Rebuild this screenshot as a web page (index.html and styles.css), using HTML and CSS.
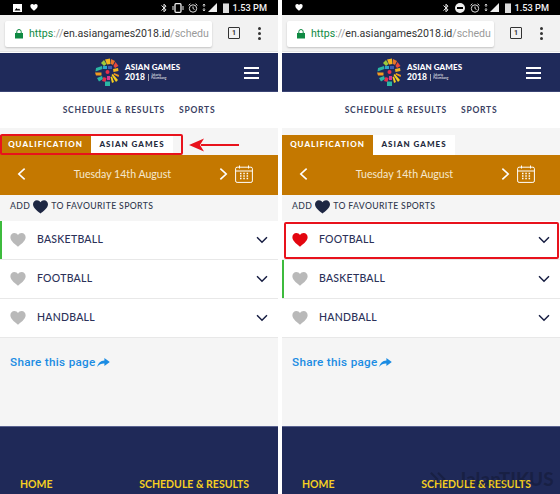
FILE: index.html
```html
<!DOCTYPE html>
<html lang="en">
<head>
<meta charset="UTF-8" />
<title>Asian Games 2018 favourite sports</title>
<link rel="stylesheet" href="styles.css">
</head>
<body>
<svg class="defs" width="0" height="0">
    <defs>
        <symbol id="heart" viewBox="0 0 24 22">
            <path d="M12 21.500C9 18.600 0 13 0 6.500 0 2.800 2.800 0 6.300 0 8.700 0 10.900 1.300 12 3.300 13.100 1.300 15.300 0 17.700 0 21.200 0 24 2.800 24 6.500 24 13 15 18.600 12 21.500Z"/>
        </symbol>
        <symbol id="chevron" viewBox="0 0 14 9">
            <path d="M1.200 1.200 7 7 12.800 1.200" fill="none" stroke="currentColor" stroke-width="1.700"/>
        </symbol>
        <symbol id="logo" viewBox="0 0 24 28">
            <path d="M6 5 9 2 11.500 6 9 8Z" fill="#9ccb3b"/>
            <path d="M10 1.500 15 0.500 15.500 6 12 6.500Z" fill="#f2b61e"/>
            <path d="M16 1 20 3 18 7 16 6Z" fill="#e8732a"/>
            <path d="M20.500 4 23.500 8 20 10 18.500 8Z" fill="#e9483c"/>
            <path d="M1 10 7 8 7.500 11 0.500 13.500Z" fill="#2bb6a3"/>
            <path d="M0 14.500H6.500V17.500H1Z" fill="#f29a1f"/>
            <path d="M8 8H12V11H8Z" fill="#2aa6c9"/>
            <path d="M13 8H17V11H13Z" fill="#3c5bb0"/>
            <path d="M18 11 23 10 23.500 13 18.500 14Z" fill="#f2b61e"/>
            <circle cx="12.500" cy="14" r="2" fill="#e9304a"/>
            <path d="M2 20 7 18 8 21 4 23.500Z" fill="#2bb6a3"/>
            <path d="M8.500 19 11.500 20 10.500 24 7 23Z" fill="#e9304a"/>
            <path d="M10 23.500H15V28H10Z" fill="#2bb6a3"/>
            <path d="M12 18H15V22H12Z" fill="#d8398f"/>
            <path d="M16.500 17 17.800 16 23 22 21 24Z" fill="#f6cf1e"/>
            <path d="M15.500 19 17 18.500 19 24 17 25Z" fill="#f6cf1e"/>
            <path d="M19 15 24 17 23.500 19 18.500 16.500Z" fill="#f29a1f"/>
        </symbol>
    </defs>
</svg>

<div class="phone">
    <div class="status">
        <div class="status-left">
            <svg class="ic-photo" viewBox="0 0 9 8"><path d="M0 0h9v8H0Z" fill="#fff"/><path d="M1.500 6.500 3.500 4 5 5.500 6 4.500 7.500 6.500Z" fill="#000"/></svg>
            <svg class="ic-small" viewBox="0 0 24 22"><use href="#heart" fill="#fff"/></svg>
        </div>
        <div class="status-right">
            <svg class="ic-bt" viewBox="0 0 6 10" fill="none" stroke="#eee"><path d="M.5 2.500 5 6.800 3 8.800V1.200L5 3.200.5 7.500"/></svg>
            <svg class="ic-vibrate" viewBox="0 0 12 10" fill="none" stroke="#eee"><rect x="3" y=".7" width="6" height="8.600" rx="1" stroke-width="1.300"/><path d="M1 3v4M11 3v4"/></svg>
            <svg class="ic-alarm" viewBox="0 0 10 10" fill="none" stroke="#ddd"><circle cx="5" cy="5.500" r="3.700"/><path d="M5 3.500v2l1.500 1M.6 2.400 2.400.7M9.400 2.400 7.600.7"/></svg>
            <svg class="ic-signal" viewBox="0 0 15 9"><path d="M2 1v3M1 2.500 2 1l1 1.500M2 8V5M1 6.500 2 8l1-1.500" stroke="#eee" fill="none" stroke-width=".8"/><path d="M15 0v9H6Z" fill="#eee"/></svg>
            <span class="ic-battery"></span>
            <span>1.53 PM</span>
        </div>
    </div>
    <div class="chrome">
        <div class="urlbar">
            <svg class="lock" viewBox="0 0 8 9"><path d="M0 3.500h8V9H0Z" fill="#0f8a43"/><path d="M1.800 3.500V2.200a2.200 2.200 0 0 1 4.400 0V3.500" fill="none" stroke="#0f8a43"/></svg>
            <span class="url"><span class="url-https">https</span><span class="url-dim">://</span>en.asiangames2018.id<span class="url-dim">/schedu</span></span>
        </div>
        <span class="tabcount">1</span>
        <span class="dots"><i></i><i></i><i></i></span>
    </div>
    <header class="head">
        <svg class="logo-mark"><use href="#logo"/></svg>
        <div class="logo-text">
            <div>ASIAN GAMES</div>
            <div class="logo-year">2018<span class="logo-sub">Jakarta<br>Palembang</span></div>
        </div>
        <span class="burger"><i></i><i></i><i></i></span>
    </header>
    <nav class="mainnav"><span>SCHEDULE &amp; RESULTS</span><span>SPORTS</span></nav>
    <main class="content">
        <div class="tabs">
            <span class="tab tab-on">QUALIFICATION</span>
            <span class="tab">ASIAN GAMES</span>
        </div>
        <div class="datebar">
            <svg class="arrow" viewBox="0 0 10 14"><path d="M8.500 1 2 7l6.500 6" fill="none" stroke="#fff" stroke-width="1.800"/></svg>
            <span class="date">Tuesday 14th August</span>
            <svg class="arrow" viewBox="0 0 10 14"><path d="M1.500 1 8 7l-6.500 6" fill="none" stroke="#fff" stroke-width="1.800"/></svg>
            <svg class="cal" viewBox="0 0 18 18" fill="none" stroke="#fff"><rect x=".6" y="2.200" width="16.800" height="15.200" rx="1.500"/><path d="M.6 6h16.800M4.500 .5v3M13.500 .5v3"/><path d="M5 8.500h1.500M8.300 8.500h1.500M11.600 8.500h1.500M5 11h1.500M8.300 11h1.500M11.600 11h1.500M5 13.500h1.500M8.300 13.500h1.500M11.600 13.500h1.500" stroke-width="1.400"/></svg>
        </div>
        <div class="addline">ADD <svg class="add-heart"><use href="#heart" fill="#1e2743"/></svg> TO FAVOURITE SPORTS</div>
        <div class="row row-green"><svg class="heart"><use href="#heart" fill="#b9b9b9"/></svg><span class="sport">BASKETBALL</span><svg class="chev"><use href="#chevron"/></svg></div>
        <div class="row"><svg class="heart"><use href="#heart" fill="#b9b9b9"/></svg><span class="sport">FOOTBALL</span><svg class="chev"><use href="#chevron"/></svg></div>
        <div class="row"><svg class="heart"><use href="#heart" fill="#b9b9b9"/></svg><span class="sport">HANDBALL</span><svg class="chev"><use href="#chevron"/></svg></div>
        <div class="share">Share this page<svg class="share-ic" viewBox="0 0 14 10"><path d="M8 0l6 4.500L8 9V6.200C5 6 2.500 7 0 10 .8 6 3.500 3 8 2.800Z" fill="#1b8ce3"/></svg></div>
    </main>
    <footer class="foot"><span>HOME</span><span>SCHEDULE &amp; RESULTS</span></footer>
    <div class="mark-box mark-tabs"></div>
    <svg class="mark-arrow" viewBox="0 0 50 14"><path d="M50 7H12" stroke="#e8121c" stroke-width="2"/><path d="M0 7 15 0.500 11 7 15 13.500Z" fill="#e8121c"/></svg>
</div>

<div class="phone">
    <div class="status">
        <div class="status-left">
            <svg class="ic-small" viewBox="0 0 24 22"><use href="#heart" fill="#fff"/></svg>
        </div>
        <div class="status-right">
            <svg class="ic-bt" viewBox="0 0 6 10" fill="none" stroke="#eee"><path d="M.5 2.500 5 6.800 3 8.800V1.200L5 3.200.5 7.500"/></svg>
            <span class="ic-dnd"></span>
            <svg class="ic-alarm" viewBox="0 0 10 10" fill="none" stroke="#ddd"><circle cx="5" cy="5.500" r="3.700"/><path d="M5 3.500v2l1.500 1M.6 2.400 2.400.7M9.400 2.400 7.600.7"/></svg>
            <svg class="ic-signal" viewBox="0 0 15 9"><path d="M2 1v3M1 2.500 2 1l1 1.500M2 8V5M1 6.500 2 8l1-1.500" stroke="#eee" fill="none" stroke-width=".8"/><path d="M15 0v9H6Z" fill="#eee"/></svg>
            <span class="ic-battery"></span>
            <span>1.53 PM</span>
        </div>
    </div>
    <div class="chrome">
        <div class="urlbar">
            <svg class="lock" viewBox="0 0 8 9"><path d="M0 3.500h8V9H0Z" fill="#0f8a43"/><path d="M1.800 3.500V2.200a2.200 2.200 0 0 1 4.400 0V3.500" fill="none" stroke="#0f8a43"/></svg>
            <span class="url"><span class="url-https">https</span><span class="url-dim">://</span>en.asiangames2018.id<span class="url-dim">/schedu</span></span>
        </div>
        <span class="tabcount">1</span>
        <span class="dots"><i></i><i></i><i></i></span>
    </div>
    <header class="head">
        <svg class="logo-mark"><use href="#logo"/></svg>
        <div class="logo-text">
            <div>ASIAN GAMES</div>
            <div class="logo-year">2018<span class="logo-sub">Jakarta<br>Palembang</span></div>
        </div>
        <span class="burger"><i></i><i></i><i></i></span>
    </header>
    <nav class="mainnav"><span>SCHEDULE &amp; RESULTS</span><span>SPORTS</span></nav>
    <main class="content">
        <div class="tabs">
            <span class="tab tab-on">QUALIFICATION</span>
            <span class="tab">ASIAN GAMES</span>
        </div>
        <div class="datebar">
            <svg class="arrow" viewBox="0 0 10 14"><path d="M8.500 1 2 7l6.500 6" fill="none" stroke="#fff" stroke-width="1.800"/></svg>
            <span class="date">Tuesday 14th August</span>
            <svg class="arrow" viewBox="0 0 10 14"><path d="M1.500 1 8 7l-6.500 6" fill="none" stroke="#fff" stroke-width="1.800"/></svg>
            <svg class="cal" viewBox="0 0 18 18" fill="none" stroke="#fff"><rect x=".6" y="2.200" width="16.800" height="15.200" rx="1.500"/><path d="M.6 6h16.800M4.500 .5v3M13.500 .5v3"/><path d="M5 8.500h1.500M8.300 8.500h1.500M11.600 8.500h1.500M5 11h1.500M8.300 11h1.500M11.600 11h1.500M5 13.500h1.500M8.300 13.500h1.500M11.600 13.500h1.500" stroke-width="1.400"/></svg>
        </div>
        <div class="addline">ADD <svg class="add-heart"><use href="#heart" fill="#1e2743"/></svg> TO FAVOURITE SPORTS</div>
        <div class="row"><svg class="heart"><use href="#heart" fill="#e3060f"/></svg><span class="sport">FOOTBALL</span><svg class="chev"><use href="#chevron"/></svg></div>
        <div class="row row-green"><svg class="heart"><use href="#heart" fill="#b9b9b9"/></svg><span class="sport">BASKETBALL</span><svg class="chev"><use href="#chevron"/></svg></div>
        <div class="row"><svg class="heart"><use href="#heart" fill="#b9b9b9"/></svg><span class="sport">HANDBALL</span><svg class="chev"><use href="#chevron"/></svg></div>
        <div class="share">Share this page<svg class="share-ic" viewBox="0 0 14 10"><path d="M8 0l6 4.500L8 9V6.200C5 6 2.500 7 0 10 .8 6 3.500 3 8 2.800Z" fill="#1b8ce3"/></svg></div>
    </main>
    <footer class="foot"><span>HOME</span><span>SCHEDULE &amp; RESULTS</span></footer>
    <div class="mark-box mark-row"></div>
    <div class="watermark">
        <svg class="wm-ic" viewBox="0 0 18 16" fill="none" stroke="currentColor" stroke-width="2.500"><path d="M1 1 8 8 1 15M9 1l7 7-7 7"/></svg>
        <span>JalanTIKUS</span>
    </div>
</div>
</body>
</html>
```

FILE: styles.css
```css
html, body {
    margin: 0;
    height: 494px;
    overflow: hidden;
}
body {
    display: flex;
    justify-content: space-between;
    background: #fff;
    font-family: Lato, Arial, sans-serif;
    color: #2b3158;
}
.defs {
    position: absolute;
}
.phone {
    position: relative;
    width: 278px;
    height: 494px;
    display: flex;
    flex-direction: column;
    overflow: hidden;
}

/* android status bar */
.status {
    height: 15px;
    background: #000;
    color: #f2f2f2;
    display: flex;
    justify-content: space-between;
    align-items: center;
    padding: 0 11px 0 13px;
    font: 500 9.200px Roboto, sans-serif;
}
.status-left, .status-right {
    display: flex;
    align-items: center;
    gap: 4px;
}
.status-left {
    gap: 8px;
}
.ic-photo {
    width: 9px;
    height: 8px;
}
.ic-small {
    width: 8px;
    height: 7px;
}
.ic-bt {
    width: 6px;
    height: 10px;
    margin-right: 1px;
}
.ic-vibrate {
    width: 12px;
    height: 10px;
}
.ic-dnd {
    width: 10px;
    height: 10px;
    margin: 0 1px;
    border-radius: 50%;
    background: #eee linear-gradient(#000, #000) center / 6px 2px no-repeat;
}
.ic-alarm {
    width: 10px;
    height: 10px;
}
.ic-signal {
    width: 15px;
    height: 9px;
}
.ic-battery {
    width: 6px;
    height: 9px;
    margin-left: 2px;
    background: #ddd;
    border-top: 1px solid #777;
}

/* browser toolbar */
.chrome {
    height: 37px;
    background: #f2f2f2;
    display: flex;
    align-items: center;
    padding: 0 9px 0 5px;
    box-sizing: border-box;
    border-bottom: 1px solid #e4e4e4;
}
.urlbar {
    flex: none;
    width: 207px;
    height: 26px;
    background: #fff;
    border-radius: 2px;
    box-shadow: 0 1px 2px rgba(0,0,0,0.2);
    display: flex;
    align-items: center;
    padding-left: 10px;
    box-sizing: border-box;
    gap: 6px;
    margin-top: 1px;
}
.lock {
    width: 8px;
    height: 10px;
    flex: none;
}
.url {
    font: 10.600px Roboto, sans-serif;
    color: #333;
    white-space: nowrap;
}
.url-https {
    color: #0f8a43;
}
.url-dim {
    color: #9a9a9a;
}
.tabcount {
    flex: none;
    width: 10px;
    height: 10px;
    margin-left: 16px;
    border: 1px solid #333;
    border-radius: 1px;
    font: bold 7px/10px Roboto, sans-serif;
    text-align: center;
    color: #333;
}
.dots {
    display: flex;
    flex-direction: column;
    gap: 2px;
    margin-left: 18px;
}
.dots i {
    width: 3px;
    height: 3px;
    border-radius: 50%;
    background: #333;
}

/* site header */
.head {
    position: relative;
    height: 39px;
    margin-top: 1px;
    background: #1f2a5a;
    border-bottom: 1px solid #3a4474;
    box-sizing: border-box;
    display: flex;
    justify-content: center;
    align-items: center;
    gap: 6px;
    color: #fff;
}
.logo-mark {
    width: 24px;
    height: 28px;
}
.logo-text {
    font-size: 8px;
    font-weight: 900;
    line-height: 10px;
    letter-spacing: 0.1px;
    width: 58px;
}
.logo-year {
    display: flex;
    align-items: center;
    font-size: 8.500px;
}
.logo-sub {
    font-size: 3px;
    line-height: 3.500px;
    font-weight: 400;
    margin-left: 3px;
    padding-left: 2px;
    border-left: 1px solid #aaa;
}
.burger {
    position: absolute;
    right: 19px;
    top: 14px;
    display: flex;
    flex-direction: column;
    gap: 3px;
}
.burger i {
    width: 15px;
    height: 2px;
    background: #fff;
}
.mainnav {
    height: 36px;
    background: #fff;
    display: flex;
    justify-content: center;
    align-items: center;
    gap: 14px;
    font-size: 8.500px;
    font-weight: 700;
    letter-spacing: 0.75px;
    color: #3a3f63;
}

/* schedule */
.content {
    flex: 1;
    background: #f5f5f5;
    padding-top: 7px;
    box-sizing: border-box;
}
.tabs {
    display: flex;
    height: 20px;
}
.tab {
    width: 82px;
    background: #fff;
    color: #1f2a3c;
    font-size: 8px;
    font-weight: 900;
    letter-spacing: 1px;
    line-height: 19px;
    text-align: center;
}
.tab-on {
    width: 91px;
    background: #c47800;
    color: #fff;
}
.datebar {
    height: 40px;
    background: #c47800;
    display: flex;
    align-items: center;
    padding: 0 25px 2px 17px;
    box-sizing: border-box;
    color: #f6e8cf;
}
.arrow {
    width: 9px;
    height: 14px;
}
.date {
    flex: 1;
    text-align: center;
    font-size: 10.600px;
}
.cal {
    width: 18px;
    height: 18px;
    margin-left: 7px;
}
.addline {
    height: 26px;
    padding: 0 0 5px 10px;
    box-sizing: border-box;
    display: flex;
    align-items: center;
    gap: 3px;
    font-size: 8.700px;
    font-weight: 500;
    letter-spacing: 0.35px;
    color: #333b50;
}
.add-heart {
    width: 15px;
    height: 14px;
    margin-top: 3px;
}
.row {
    height: 38px;
    background: #fff;
    border-bottom: 1px solid #e8e8e8;
    display: flex;
    align-items: center;
    padding: 0 10px;
}
.row-green {
    box-shadow: inset 2px 0 0 #3dbb3d;
}
.heart {
    width: 16px;
    height: 14px;
    flex: none;
}
.sport {
    flex: 1;
    margin-left: 11px;
    padding-bottom: 2px;
    font-size: 10.500px;
    font-weight: 500;
    letter-spacing: 0.25px;
    color: #2b3158;
}
.chev {
    width: 12px;
    height: 8px;
    color: #141b40;
}
.share {
    display: flex;
    align-items: center;
    gap: 1px;
    margin: 17px 10px 0;
    font: 500 11.700px Roboto, sans-serif;
    letter-spacing: 0.3px;
    color: #1b8ce3;
}
.share-ic {
    width: 13px;
    height: 9px;
}
.foot {
    height: 68px;
    background: #1f2958;
    border-top: 1px solid #5a6390;
    box-sizing: border-box;
    display: flex;
    align-items: flex-end;
    justify-content: space-between;
    padding: 0 29px 4px 20px;
    font-size: 10.500px;
    font-weight: 700;
    color: #f4cf22;
}

/* red marks added over the screenshot */
.mark-box {
    position: absolute;
    border: 2px solid #e8121c;
    border-radius: 2px;
    box-sizing: border-box;
}
.mark-tabs {
    left: 0;
    top: 134px;
    width: 183px;
    height: 21px;
}
.mark-row {
    left: 2px;
    top: 222px;
    width: 275px;
    height: 37px;
}
.mark-arrow {
    position: absolute;
    left: 189px;
    top: 138px;
    width: 50px;
    height: 14px;
}
.watermark {
    position: absolute;
    left: 148px;
    top: 467px;
    display: flex;
    align-items: center;
    gap: 12px;
    font-size: 19px;
    font-weight: 900;
    color: rgba(0,0,0,0.22);
}
.wm-ic {
    width: 16px;
    height: 16px;
}
```
